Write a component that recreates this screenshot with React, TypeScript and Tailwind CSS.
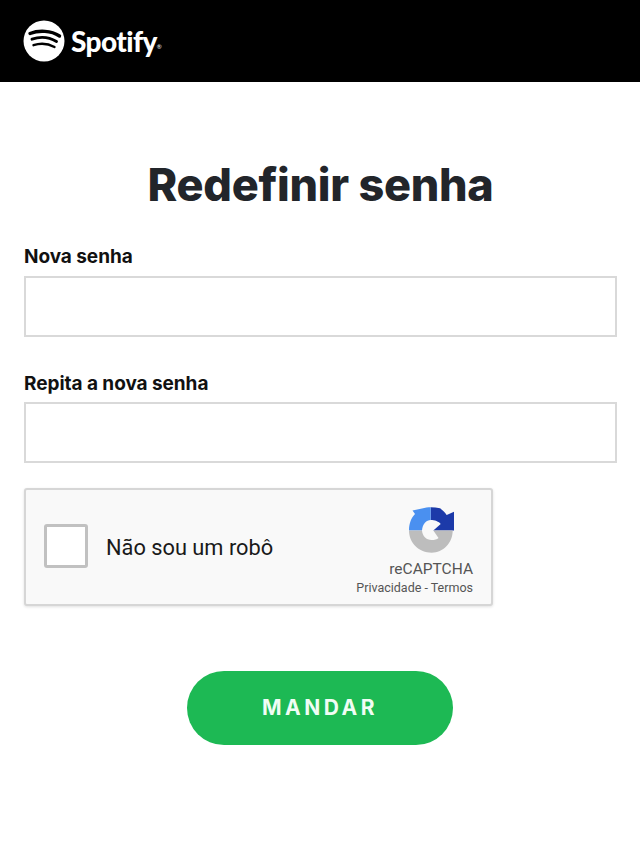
export default function App() {
  return (
    <div className="min-h-[853px] bg-white font-['Inter',sans-serif] [font-variant-ligatures:none]">
      <header className="flex h-[82px] items-center bg-black pl-[23px]">
        <div className="flex items-center gap-[6px]">
          <svg width="42" height="42" viewBox="0 0 42 42" className="block">
            <circle cx="21" cy="21" r="20.5" fill="#fff" />
            <path d="M7 13.5C16 10 28 10.5 36.5 16" fill="none" stroke="#000" strokeWidth="3.4" strokeLinecap="round" />
            <path d="M9 19.2C16.5 16.6 26 17 33.5 21.5" fill="none" stroke="#000" strokeWidth="2.9" strokeLinecap="round" />
            <path d="M10.5 25.2C17 23 25 23.5 31.5 27" fill="none" stroke="#000" strokeWidth="2.4" strokeLinecap="round" />
          </svg>
          <span className="font-['Lato',sans-serif] text-[28px] leading-none font-black tracking-[-0.6px] text-white">
            Spotify<sup className="text-[6px] font-normal">®</sup>
          </span>
        </div>
      </header>
      <main className="pr-[23px] pl-6">
        <h1 className="mt-[72px] text-center text-[45px] leading-[62px] font-extrabold tracking-[-0.3px] text-[#22252a]">Redefinir senha</h1>
        <label className="mt-[27px] block text-[19px] leading-7 font-bold tracking-[-0.05px] text-[#111]">Nova senha</label>
        <div className="mt-[5px] h-[61px] border-2 border-[#d9d9d9] bg-white" />
        <label className="mt-[33px] block text-[19px] leading-7 font-bold tracking-[-0.05px] text-[#111]">Repita a nova senha</label>
        <div className="mt-[4px] h-[61px] border-2 border-[#d9d9d9] bg-white" />
        <div className="mt-[25px] flex h-[118px] w-[469px] items-center rounded-[3px] border-2 border-[#d6d6d6] bg-[#f9f9f9] pr-[18px] pl-[18px] shadow-[0_1px_3px_rgba(0,0,0,0.12)]">
          <div className="mb-[2px] h-11 w-11 rounded-[3px] border-[3px] border-[#c1c1c1] bg-white" />
          <span className="ml-[18px] pt-[2px] font-['Roboto',sans-serif] text-[21.8px] text-[#1a1a1a]">Não sou um robô</span>
          <div className="ml-auto flex flex-col items-end self-start pt-[17px] font-['Roboto',sans-serif] text-[#555]">
            <svg width="46" height="46" viewBox="0 0 46 46" className="mr-[19px] block">
              <path d="M22.7.3C26 .3 29 .6 32 1.3C34.5 3 36.8 5.3 38.7 8L46 4.7V23.5H25.3L32.7 17C31 14.5 26.5 13 22.7 13Z" fill="#1c3aa9" />
              <path d="M22.7.3V13C18.5 13 14.5 17 14 23.5H1C1 16 3.5 10.5 7 7L4.5 3.5L14 1.5C17 .6 20 .3 22.7 .3Z" fill="#4a90f0" />
              <path d="M1 23.5H14C14.5 29 18 33 23.7 33C26.5 33 29 32.5 30.5 31L25.3 23.5H44.7C44.7 36 35 45.7 23.7 45.7C11 45.7 1 36 1 23.5Z" fill="#bdbdbd" />
            </svg>
            <span className="mt-[6px] text-[15.5px] leading-5">reCAPTCHA</span>
            <span className="mt-[1px] text-[12.5px] leading-4">Privacidade - Termos</span>
          </div>
        </div>
        <div className="mt-[65px] flex justify-center pr-[1px]">
          <button className="h-[74px] w-[266px] rounded-full bg-[#1db954] text-[21px] font-bold tracking-[3.5px] text-[#f0fdf4]">MANDAR</button>
        </div>
      </main>
    </div>
  );
}
